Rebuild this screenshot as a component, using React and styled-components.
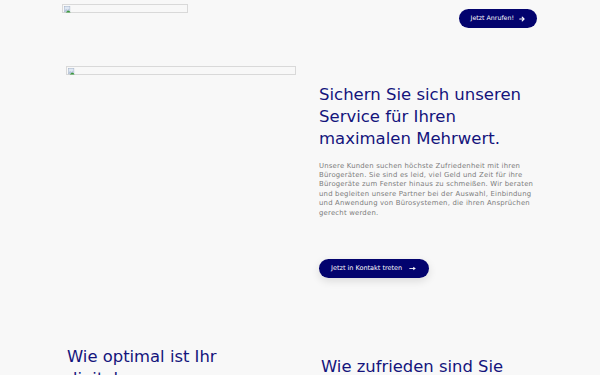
import React from "react";
import styled, { createGlobalStyle } from "styled-components";

const Global = createGlobalStyle`
  html, body { margin: 0; padding: 0; background: #f8f8f8; }
  body { font-family: "DejaVu Sans", sans-serif; overflow: hidden; }
  * { box-sizing: border-box; }
`;

const Page = styled.div`
  width: 600px;
  height: 375px;
  overflow: hidden;
  background: #f8f8f8;
`;

const Container = styled.div`
  width: 476px;
  margin: 0 auto;
`;

const Header = styled.header`
  display: flex;
  justify-content: space-between;
  align-items: flex-start;
  height: 28px;
  padding: 4px 1px 0 0;
`;

const HeaderAction = styled.div`
  display: flex;
  margin-top: 5px;
`;

const BrokenImage = styled.div`
  width: ${(p) => p.$w}px;
  height: ${(p) => p.$h}px;
  border: 1px solid #d9d9d9;
  display: flex;
  align-items: flex-start;
  padding: 1px;
  flex-shrink: 0;
`;

const PillButton = styled.button`
  display: flex;
  align-items: center;
  gap: ${(p) => p.$gap || 5}px;
  height: 19px;
  padding: 0 ${(p) => p.$pr || 12}px 0 ${(p) => p.$pl || 12}px;
  margin: 0;
  border: none;
  border-radius: 10px;
  background: #03036e;
  color: #ffffff;
  font-family: "DejaVu Sans", sans-serif;
  font-size: ${(p) => p.$fs || 6.4}px;
  line-height: 1;
  white-space: nowrap;
  box-shadow: ${(p) => (p.$shadow ? "0 3px 8px rgba(0,0,0,0.12)" : "none")};
`;

const Hero = styled.section`
  display: grid;
  grid-template-columns: 238px 1fr;
  margin-top: 34px;
`;

const LeftCol = styled.div`
  padding: 4px 4px 0 4px;
`;

const RightCol = styled.div`
  padding: 21.5px 3px 0 19px;
  display: flex;
  flex-direction: column;
  align-items: flex-start;
`;

const Heading = styled.h2`
  margin: 0;
  font-weight: 400;
  font-size: 16.5px;
  line-height: 22px;
  color: #14147c;
  white-space: nowrap;
`;

const Text = styled.p`
  margin: 12px 0 0 0;
  font-size: 6.9px;
  letter-spacing: 0.2px;
  line-height: 9.4px;
  color: #7c7c7c;
`;

const ButtonRow = styled.div`
  display: flex;
  margin-top: 41px;
`;

const Lower = styled.section`
  display: grid;
  grid-template-columns: 254px 1fr;
  margin-top: 68px;
`;

const LowerHeading = styled.h2`
  margin: 0;
  padding-left: ${(p) => p.$pl}px;
  padding-top: ${(p) => p.$pt}px;
  font-weight: 400;
  font-size: 16.4px;
  line-height: 22px;
  color: #14147c;
`;

const ImgIcon = () => (
  <svg width="7" height="7" viewBox="0 0 16 16">
    <rect x="0.5" y="0.5" width="13" height="13" fill="#dfe8f4" stroke="#9aa9c0" />
    <path d="M1 10 L5 7 L8 9 L11 6 L13 8 L13 13 L1 13Z" fill="#b9c7da" />
    <path d="M4 15 L9 10 L13 12 L15 15Z" fill="#3a9a3a" />
  </svg>
);

const ArrowBold = () => (
  <svg width="6" height="6" viewBox="0 0 16 16">
    <path d="M2 8 H13 M8.5 3 L13.5 8 L8.5 13" stroke="#fff" strokeWidth="3" fill="none" strokeLinecap="round" strokeLinejoin="round" />
  </svg>
);

const ArrowLong = () => (
  <svg width="7" height="5" viewBox="0 0 18 12">
    <path d="M1 6 H14" stroke="#fff" strokeWidth="2.2" fill="none" />
    <path d="M11 1.5 L17.5 6 L11 10.5Z" fill="#fff" />
  </svg>
);

export default function App() {
  return (
    <Page>
      <Global />
      <Container>
        <Header>
          <BrokenImage $w={126} $h={9}>
            <ImgIcon />
          </BrokenImage>
          <HeaderAction>
            <PillButton $pl={12} $pr={12} $fs={6.3}>
              Jetzt Anrufen! <ArrowBold />
            </PillButton>
          </HeaderAction>
        </Header>
        <Hero>
          <LeftCol>
            <BrokenImage $w={230} $h={9}>
              <ImgIcon />
            </BrokenImage>
          </LeftCol>
          <RightCol>
            <Heading>
              Sichern Sie sich unseren
              <br />
              Service für Ihren
              <br />
              maximalen Mehrwert.
            </Heading>
            <Text>
              Unsere Kunden suchen höchste Zufriedenheit mit ihren Bürogeräten. Sie sind es leid, viel Geld und Zeit für ihre Bürogeräte zum Fenster hinaus zu schmeißen. Wir beraten und begleiten unsere Partner bei der Auswahl, Einbindung und Anwendung von Bürosystemen, die ihren Ansprüchen gerecht werden.
            </Text>
            <ButtonRow>
              <PillButton $shadow $pl={12} $pr={13} $gap={7} $fs={6.5}>
                Jetzt in Kontakt treten <ArrowLong />
              </PillButton>
            </ButtonRow>
          </RightCol>
        </Hero>
        <Lower>
          <LowerHeading $pl={5} $pt={0}>
            Wie optimal ist Ihr
            <br />
            digitales
          </LowerHeading>
          <LowerHeading $pl={5} $pt={10.5}>
            Wie zufrieden sind Sie
          </LowerHeading>
        </Lower>
      </Container>
    </Page>
  );
}
